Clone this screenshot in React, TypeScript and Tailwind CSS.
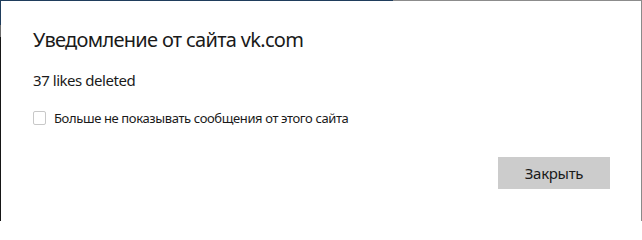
export default function App() {
  return (
    <div className="w-[642px] h-[221px] flex flex-col bg-[#111] overflow-hidden" style={{ fontFamily: '"Noto Sans", "Open Sans", sans-serif' }}>
      {/* strip of the page behind the dialog */}
      <div className="h-px flex shrink-0">
        <div className="w-[393px] bg-[#1f3d5c]" />
        <div className="flex-1 bg-[#8c8c8c]" />
      </div>
      <div className="flex flex-1">
        <div className="w-px flex flex-col">
          <div className="h-[24px] bg-[#1f3d5c]" />
          <div className="h-[12px] bg-[#6b6b6b]" />
          <div className="flex-1 bg-[#161616]" />
        </div>
        <div className="flex-1 bg-white flex flex-col pl-[32px] pr-[31px]">
          <div className="pt-[26px] text-[20px] leading-[26px] tracking-[-0.7px] text-[#1a1a1a]">Уведомление от сайта vk.com</div>
          <div className="mt-[17px] text-[15px] leading-[20px] tracking-[-0.45px] text-[#1a1a1a]">37 likes deleted</div>
          <label className="mt-[20px] flex items-center gap-[8px] text-[13px] leading-[16px] tracking-[-0.38px] text-[#1a1a1a]">
            <span className="w-[13px] h-[14px] border border-[#c8c8c8] rounded-[2px] bg-white" />
            <span>Больше не показывать сообщения от этого сайта</span>
          </label>
          <div className="mt-[31px] flex justify-end">
            <button className="w-[112px] h-[32px] bg-[#cccccc] text-[15px] tracking-[-0.3px] text-[#1a1a1a]">Закрыть</button>
          </div>
        </div>
        <div className="w-px bg-[#8a8a8a]" />
      </div>
    </div>
  )
}
